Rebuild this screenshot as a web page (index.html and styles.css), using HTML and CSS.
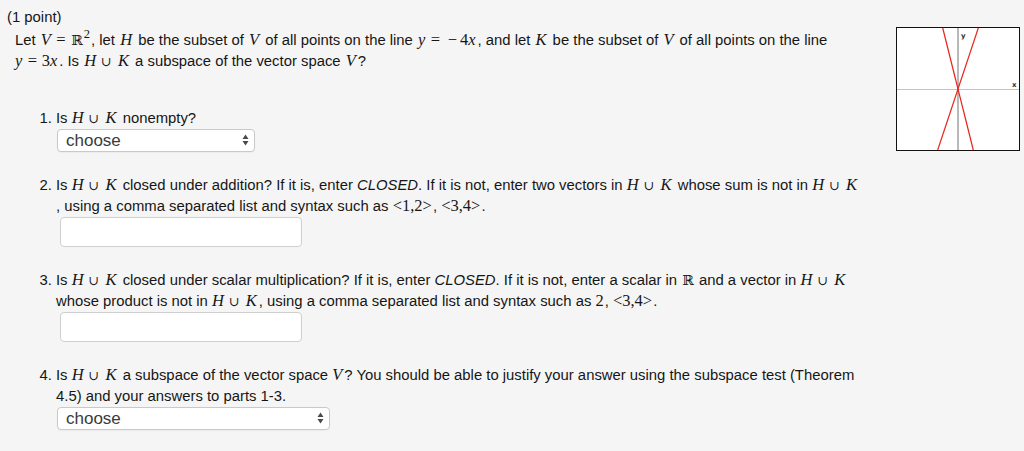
FILE: index.html
```html
<!DOCTYPE html>
<html>
<head>
<meta charset="utf-8">
<link rel="stylesheet" href="styles.css">
</head>
<body>
<div class="problem">
  <figure class="graph">
    <svg width="124" height="124" viewBox="0 0 124 124">
      <rect x="0.5" y="0.5" width="123" height="123" fill="#fff" stroke="#111" stroke-width="1"/>
      <line x1="1" y1="62.5" x2="123" y2="62.5" stroke="#c4c4c4" stroke-width="1.2"/>
      <line x1="62" y1="1" x2="62" y2="123" stroke="#8a8a8a" stroke-width="1.2"/>
      <line x1="46.7" y1="1" x2="77.3" y2="123" stroke="#e8271f" stroke-width="1.2"/>
      <line x1="82.3" y1="1" x2="41.7" y2="123" stroke="#e8271f" stroke-width="1.2"/>
      <text x="65" y="11" class="axlabel">y</text>
      <text x="116" y="60" class="axlabel">x</text>
    </svg>
  </figure>
  <div class="points">(1 point)</div>
  <p class="intro">Let <span class="math"><i>V</i><span class="rel">=</span><span class="bb">ℝ</span><sup class="sup">2</sup></span>, let <span class="math"><i>H</i></span> be the subset of <span class="math"><i>V</i></span> of all points on the line <span class="math"><i>y</i><span class="rel">=</span><span class="neg">−</span><span class="num">4</span><i>x</i></span>, and let <span class="math"><i>K</i></span> be the subset of <span class="math"><i>V</i></span> of all points on the line<br><span class="math first"><i>y</i><span class="rel">=</span><span class="num">3</span><i>x</i></span>. Is <span class="math"><i>H</i><span class="bin">∪</span><i>K</i></span> a subspace of the vector space <span class="math"><i>V</i></span>?</p>
  <ol class="parts">
    <li class="part">
      <p class="q">Is <span class="math"><i>H</i><span class="bin">∪</span><i>K</i></span> nonempty?</p>
      <span class="selwrap sel-short">
        <select class="sel"><option>choose</option></select>
        <svg class="arrows" width="7" height="12" viewBox="0 0 7 12"><path d="M3.5 0.5 L6.5 5 L0.5 5 Z M0.5 7 L6.5 7 L3.5 11.5 Z" fill="#4a4a4a"/></svg>
      </span>
    </li>
    <li class="part">
      <p class="q">Is <span class="math"><i>H</i><span class="bin">∪</span><i>K</i></span> closed under addition? If it is, enter <em>CLOSED</em>. If it is not, enter two vectors in <span class="math"><i>H</i><span class="bin">∪</span><i>K</i></span> whose sum is not in <span class="math"><i>H</i><span class="bin">∪</span><i>K</i></span><br>, using a comma separated list and syntax such as <span class="math"><span class="num">&lt;1,2&gt;</span></span>, <span class="math"><span class="num">&lt;3,4&gt;</span></span>.</p>
      <input class="ans" type="text">
    </li>
    <li class="part">
      <p class="q">Is <span class="math"><i>H</i><span class="bin">∪</span><i>K</i></span> closed under scalar multiplication? If it is, enter <em>CLOSED</em>. If it is not, enter a scalar in <span class="math"><span class="bb">ℝ</span></span> and a vector in <span class="math"><i>H</i><span class="bin">∪</span><i>K</i></span><br>whose product is not in <span class="math"><i>H</i><span class="bin">∪</span><i>K</i></span>, using a comma separated list and syntax such as <span class="math"><span class="num">2</span></span>, <span class="math"><span class="num">&lt;3,4&gt;</span></span>.</p>
      <input class="ans" type="text">
    </li>
    <li class="part">
      <p class="q">Is <span class="math"><i>H</i><span class="bin">∪</span><i>K</i></span> a subspace of the vector space <span class="math"><i>V</i></span>? You should be able to justify your answer using the subspace test (Theorem<br>4.5) and your answers to parts 1-3.</p>
      <span class="selwrap sel-long">
        <select class="sel"><option>choose</option></select>
        <svg class="arrows" width="7" height="12" viewBox="0 0 7 12"><path d="M3.5 0.5 L6.5 5 L0.5 5 Z M0.5 7 L6.5 7 L3.5 11.5 Z" fill="#4a4a4a"/></svg>
      </span>
    </li>
  </ol>
</div>
</body>
</html>
```
FILE: styles.css
```css
html, body {
  margin: 0;
  padding: 0;
  background: #f5f5f5;
}
body {
  font-family: "Liberation Sans", Arial, sans-serif;
  font-size: 14.85px;
  line-height: 21px;
  color: #151515;
}
.problem {
  padding: 6.5px 0 0 7px;
}
.graph {
  float: right;
  margin: 20.5px 4px 0 0;
  width: 124px;
  height: 124px;
}
.graph svg {
  display: block;
}
.axlabel {
  font-family: "DejaVu Sans", sans-serif;
  font-size: 7px;
  font-weight: bold;
  fill: #333;
}
.points {
  margin: 0 0 2px 0;
}
.intro {
  margin: 0 0 0 8px;
}
.math {
  font-family: "Liberation Serif", "Times New Roman", serif;
  font-size: 16.5px;
  line-height: 1;
  margin: 0 1px 0 0;
}
.intro .math {
  margin-left: 1px;
}
.intro .math.first {
  margin-left: 0;
}
.math i {
  font-style: italic;
  padding-right: 1px;
}
.rel {
  margin: 0 4.5px;
}
.bin {
  font-family: "DejaVu Serif", serif;
  font-size: 13px;
  margin: 0 6px 0 4px;
}
.neg {
  margin-left: 3px;
  margin-right: 3px;
}
.bb {
  font-family: "DejaVu Serif", serif;
  font-size: 14px;
  margin-left: 1px;
}
.sup {
  font-family: "Liberation Serif", serif;
  font-size: 12.5px;
  line-height: 0;
  vertical-align: 7px;
  margin-left: 1px;
}
em {
  font-style: italic;
}
.parts {
  margin: 36px 0 0 7px;
  padding: 0 0 0 42px;
}
.part {
  margin: 0 0 23px 0;
}
.q {
  margin: 0;
}
.selwrap {
  position: relative;
  display: block;
  margin: 0 0 0 1px;
  height: 23px;
}
.sel-short { width: 198px; }
.sel-long { width: 273px; }
.sel {
  appearance: none;
  -webkit-appearance: none;
  width: 100%;
  height: 23px;
  margin: 0;
  padding: 0 0 0 8px;
  border: 1px solid #c9c9c9;
  border-radius: 4px;
  background: #fff;
  font-family: "Liberation Sans", Arial, sans-serif;
  font-size: 17px;
  color: #3a3a3a;
  box-shadow: 0 1px 1px rgba(0,0,0,0.04);
}
.arrows {
  position: absolute;
  right: 6px;
  top: 5px;
  pointer-events: none;
}
.ans {
  display: block;
  box-sizing: border-box;
  width: 242px;
  height: 30px;
  margin: 0 0 0 4px;
  padding: 0 6px;
  border: 1px solid #cfcfcf;
  border-radius: 4px;
  background: #fff;
  font-size: 14px;
}
```
